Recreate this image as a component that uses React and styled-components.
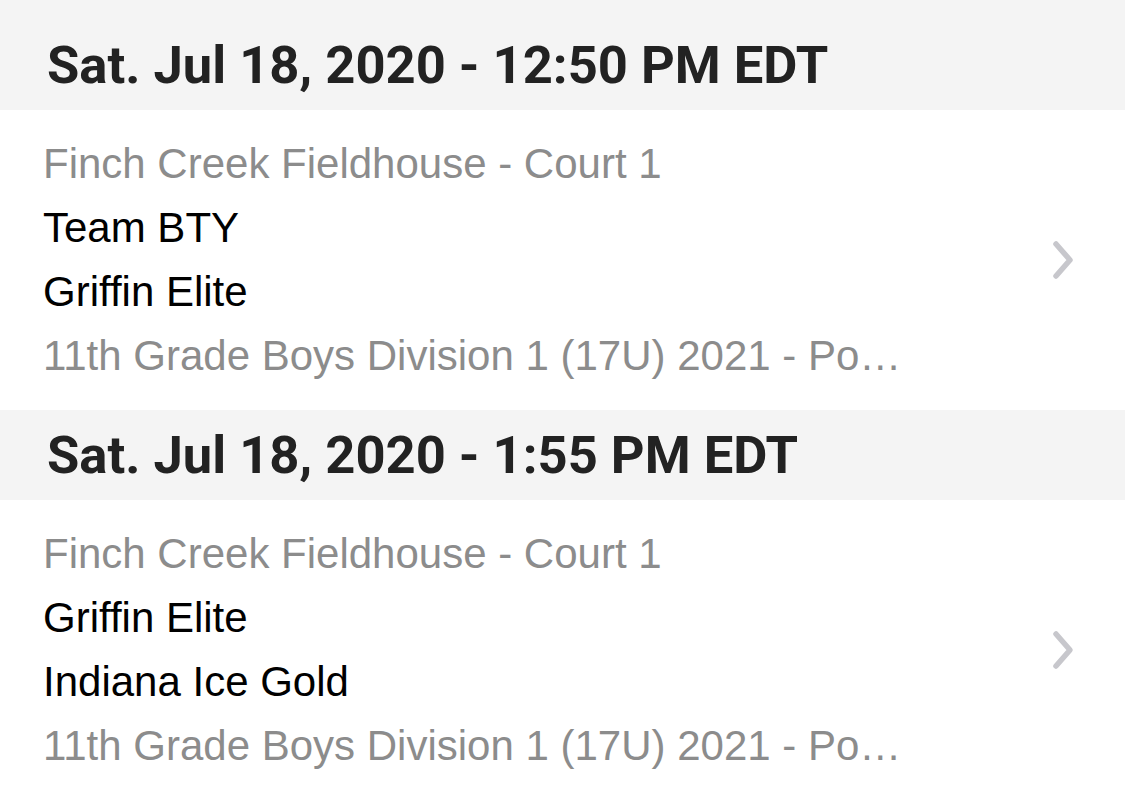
import React from "react";
import styled, { createGlobalStyle } from "styled-components";

const Global = createGlobalStyle`
  html, body { margin: 0; padding: 0; background: #fff; }
  body { font-family: "Liberation Sans", Arial, sans-serif; overflow: hidden; }
`;

const List = styled.div`
  display: flex;
  flex-direction: column;
  width: 1125px;
`;

const SectionHeader = styled.div`
  background: #f4f4f4;
  height: ${(p) => (p.$first ? 110 : 90)}px;
  padding: ${(p) => (p.$first ? "20px" : "0")} 0 0 47px;
  box-sizing: border-box;
  display: flex;
  align-items: center;
  font-family: Roboto, "Liberation Sans", sans-serif;
  font-weight: 700;
  font-size: 52.5px;
  color: #222;
`;

const Row = styled.div`
  display: flex;
  align-items: center;
  padding: 22px 50px 22px 43px;
  background: #fff;
`;

const Content = styled.div`
  flex: 1;
  min-width: 0;
  display: flex;
  flex-direction: column;
`;

const Line = styled.div`
  height: 64px;
  line-height: 64px;
  font-size: 42px;
  color: ${(p) => (p.$muted ? "#8c8c8c" : "#000")};
  white-space: nowrap;
`;

const Chevron = () => (
  <svg width="24" height="40" viewBox="0 0 24 40" style={{ flexShrink: 0 }}>
    <path d="M5 4 L19 20 L5 36" fill="none" stroke="#c7c7cc" strokeWidth="5.5" strokeLinecap="round" strokeLinejoin="round" />
  </svg>
);

const games = [
  {
    time: "Sat. Jul 18, 2020 - 12:50 PM EDT",
    venue: "Finch Creek Fieldhouse - Court 1",
    home: "Team BTY",
    away: "Griffin Elite",
    division: "11th Grade Boys Division 1 (17U) 2021 - Po…",
  },
  {
    time: "Sat. Jul 18, 2020 - 1:55 PM EDT",
    venue: "Finch Creek Fieldhouse - Court 1",
    home: "Griffin Elite",
    away: "Indiana Ice Gold",
    division: "11th Grade Boys Division 1 (17U) 2021 - Po…",
  },
];

export default function App() {
  return (
    <>
      <Global />
      <List>
        {games.map((g, i) => (
          <React.Fragment key={i}>
            <SectionHeader $first={i === 0}>{g.time}</SectionHeader>
            <Row>
              <Content>
                <Line $muted>{g.venue}</Line>
                <Line>{g.home}</Line>
                <Line>{g.away}</Line>
                <Line $muted>{g.division}</Line>
              </Content>
              <Chevron />
            </Row>
          </React.Fragment>
        ))}
      </List>
    </>
  );
}
